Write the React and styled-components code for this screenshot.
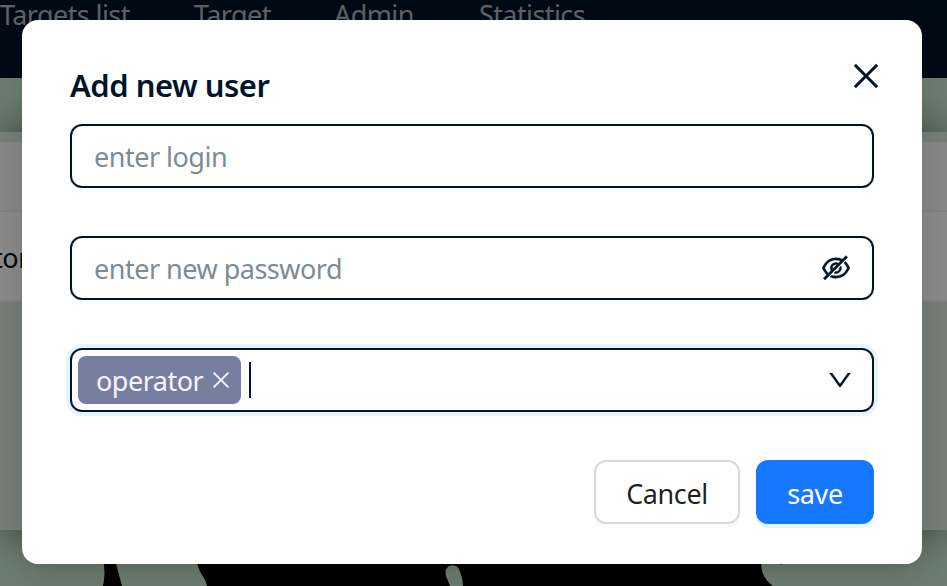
import styled, { createGlobalStyle } from "styled-components";
import {
  AiOutlineClose,
  AiOutlineDown,
  AiOutlineEyeInvisible,
} from "react-icons/ai";

const GlobalStyle = createGlobalStyle`
  * {
    box-sizing: border-box;
  }
  body {
    margin: 0;
    overflow: hidden;
    font-family: "Noto Sans", "Open Sans", sans-serif;
    font-size: 27px;
    color: #001529;
  }
`;

const Page = styled.div`
  position: relative;
  height: 586px;
  overflow: hidden;
  background-color: #cbe9d3;
`;
const Navbar = styled.nav`
  display: flex;
  gap: 64px;
  height: 78px;
  background-color: #001529;
`;
const NavItem = styled.span`
  width: ${(props) => props.width}px;
  margin-top: -5px;
  line-height: 40px;
  white-space: nowrap;
  letter-spacing: -0.6px;
  color: rgba(255, 255, 255, 0.7);
`;
const Panel = styled.div`
  height: 398px;
  margin-top: 54px;
  padding-top: 10px;
  background-color: #dbebdf;
  box-shadow: 0 0 40px rgba(0, 0, 0, 0.5);
`;
const TableHead = styled.div`
  height: 70px;
  background-color: #fafafa;
  border-bottom: 2px solid #f0f0f0;
`;
const TableRow = styled.div`
  display: flex;
  align-items: center;
  height: 90px;
  padding-top: 2px;
  background-color: #fff;
  border-bottom: 2px solid #f0f0f0;
`;
const RoleCell = styled.span`
  margin-left: -7px;
  letter-spacing: -0.4px;
`;
const Waves = styled.svg`
  position: absolute;
  left: 0;
  bottom: 0;
`;

const Mask = styled.div`
  position: absolute;
  inset: 0;
  display: flex;
  align-items: flex-start;
  padding: 20px 25px 0 22px;
  background-color: rgba(0, 0, 0, 0.45);
`;
const Modal = styled.div`
  width: 900px;
  height: 544px;
  padding: 40px 48px;
  background-color: #fff;
  border-radius: 16px;
  box-shadow: 0 12px 32px rgba(0, 0, 0, 0.08),
    0 6px 12px -8px rgba(0, 0, 0, 0.12), 0 18px 56px 16px rgba(0, 0, 0, 0.05);
`;
const Header = styled.div`
  display: flex;
  justify-content: space-between;
  height: 64px;
`;
const Title = styled.h1`
  margin: 0;
  font-size: 31px;
  font-weight: 600;
  line-height: 50px;
  letter-spacing: -0.5px;
`;
const CloseButton = styled.button`
  display: flex;
  width: 36px;
  height: 36px;
  margin: -2px -10px 0 0;
  padding: 0;
  border: none;
  background: none;
  color: #001529;
  cursor: pointer;
`;
const Field = styled.div`
  display: flex;
  align-items: center;
  height: 64px;
  margin-bottom: 48px;
  padding: ${(props) => (props.$tags ? "0 18px 0 6px" : "0 20px 0 22px")};
  border: 2px solid #001529;
  border-radius: 12px;
  box-shadow: ${(props) =>
    props.$focused ? "0 0 0 4px rgba(5, 145, 255, 0.1)" : "none"};
`;
const Input = styled.input`
  flex: 1;
  min-width: 0;
  padding: 0;
  border: none;
  outline: none;
  background: none;
  font: inherit;
  letter-spacing: -0.5px;
  color: #001529;
  &::placeholder {
    color: #808a94;
  }
`;
const EyeIcon = styled(AiOutlineEyeInvisible)`
  stroke-width: 16px;
`;
const Tag = styled.span`
  display: flex;
  align-items: center;
  gap: 6px;
  width: 163px;
  height: 48px;
  padding-left: 18px;
  background-color: #777fa1;
  border-radius: 8px;
  letter-spacing: -0.5px;
  color: #f7f5fb;
`;
const Caret = styled.span`
  width: 2px;
  height: 36px;
  margin-left: 8px;
  background-color: #001529;
`;
const ArrowDown = styled(AiOutlineDown)`
  margin-left: auto;
  stroke-width: 12px;
`;
const Footer = styled.div`
  display: flex;
  justify-content: flex-end;
  gap: 16px;
`;
const Button = styled.button`
  width: ${(props) => (props.$primary ? 118 : 146)}px;
  height: 64px;
  padding: 3px 0 0;
  border: 2px solid ${(props) => (props.$primary ? "#1677ff" : "#d9d9d9")};
  border-radius: 12px;
  background-color: ${(props) => (props.$primary ? "#1677ff" : "#fff")};
  box-shadow: 0 4px 0
    ${(props) =>
      props.$primary ? "rgba(5, 145, 255, 0.1)" : "rgba(0, 0, 0, 0.02)"};
  font: inherit;
  letter-spacing: -0.4px;
  color: ${(props) => (props.$primary ? "#fff" : "rgba(0, 0, 0, 0.88)")};
  cursor: pointer;
`;

const App = () => {
  return (
    <>
      <GlobalStyle />
      <Page>
        <Navbar>
          <NavItem width={130}>Targets list</NavItem>
          <NavItem width={76}>Target</NavItem>
          <NavItem width={81}>Admin</NavItem>
          <NavItem width={108}>Statistics</NavItem>
        </Navbar>
        <Panel>
          <TableHead />
          <TableRow>
            <RoleCell>tor</RoleCell>
          </TableRow>
        </Panel>
        <Waves width="947" height="56" viewBox="0 530 947 56">
          <path d="M103 560 Q106 572 103 586 H122 L115 560 Z" />
          <path d="M197 560 C198 574 206 577 207 586 H450 L446 576 C443 565 455 562 459 569 Q463 579 463 586 H773 C764 579 761 573 761 560 Z" />
          <path d="M778 560 Q780 568 784 562 V560 Z" />
        </Waves>
        <Mask>
          <Modal>
            <Header>
              <Title>Add new user</Title>
              <CloseButton>
                <AiOutlineClose size={36} />
              </CloseButton>
            </Header>
            <Field>
              <Input placeholder="enter login" />
            </Field>
            <Field>
              <Input placeholder="enter new password" />
              <EyeIcon size={32} />
            </Field>
            <Field $tags $focused>
              <Tag>
                operator
                <AiOutlineClose size={24} />
              </Tag>
              <Caret />
              <ArrowDown size={28} />
            </Field>
            <Footer>
              <Button>Cancel</Button>
              <Button $primary>save</Button>
            </Footer>
          </Modal>
        </Mask>
      </Page>
    </>
  );
};

export default App;
